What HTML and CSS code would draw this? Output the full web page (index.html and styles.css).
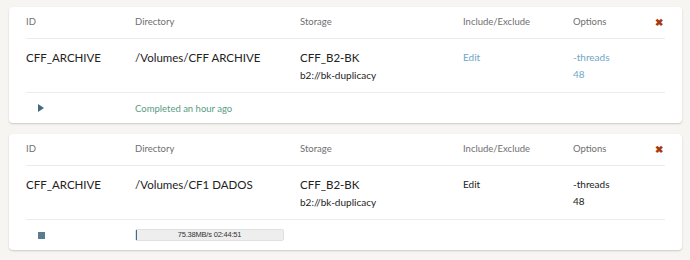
FILE: index.html
```html
<!DOCTYPE html>
<html>
<head>
    <title>Backups</title>
    <link rel="stylesheet" href="styles.css">
</head>
<body>
    <!-- first backup: finished -->
    <div class="card">
        <div class="grid head">
            <div>ID</div>
            <div>Directory</div>
            <div>Storage</div>
            <div>Include/Exclude</div>
            <div>Options</div>
            <div class="remove">&#10006;</div>
        </div>
        <div class="grid row">
            <div class="big">CFF_ARCHIVE</div>
            <div class="big">/Volumes/CFF ARCHIVE</div>
            <div><span class="big">CFF_B2-BK</span><br><span class="sub">b2://bk-duplicacy</span></div>
            <div class="link">Edit</div>
            <div class="link">-threads<br>48</div>
            <div></div>
        </div>
        <div class="grid foot">
            <div><span class="play"></span></div>
            <div class="status">Completed an hour ago</div>
        </div>
    </div>

    <!-- second backup: running -->
    <div class="card">
        <div class="grid head">
            <div>ID</div>
            <div>Directory</div>
            <div>Storage</div>
            <div>Include/Exclude</div>
            <div>Options</div>
            <div class="remove">&#10006;</div>
        </div>
        <div class="grid row">
            <div class="big">CFF_ARCHIVE</div>
            <div class="big">/Volumes/CF1 DADOS</div>
            <div><span class="big">CFF_B2-BK</span><br><span class="sub">b2://bk-duplicacy</span></div>
            <div class="plain">Edit</div>
            <div class="plain">-threads<br>48</div>
            <div></div>
        </div>
        <div class="grid foot">
            <div><span class="stop"></span></div>
            <div><div class="progress"><div class="fill" style="width: 1px"></div><span>75.38MB/s 02:44:51</span></div></div>
        </div>
    </div>
</body>
</html>
```

FILE: styles.css
```css
body {
    margin: 0;
    padding: 7px 8px 0 9px;
    background-color: #f6f5f1;
    font-family: "Lato", sans-serif;
    color: #222;
}
.card {
    background-color: white;
    border-radius: 4px;
    box-shadow: 0 1px 2px rgba(0,0,0,0.18);
    padding: 0 17px 0 17px;
    margin-bottom: 11px;
}
.grid {
    display: grid;
    grid-template-columns: 109px 165px 163px 110px 1fr 14px;
}
.head {
    font-size: 9.5px;
    color: #6f6f6f;
    height: 31px;
    line-height: 30px;
    border-bottom: 1px solid #eeece6;
}
.remove {
    color: #a8380f;
    font-size: 10px;
    font-weight: bold;
    text-align: right;
    padding-right: 2px;
}
.row {
    height: 54px;
    padding-top: 10px;
    box-sizing: border-box;
    line-height: 17px;
    border-bottom: 1px solid #eeece6;
    font-size: 10px;
}
.big {font-size: 11.5px;}
.sub {font-size: 10px;}
.link {color: #6fa6c9;}
.plain {color: #222;}
.foot {
    height: 30px;
    align-items: center;
    font-size: 9.5px;
}
.status {color: #5a9c84;}
.play {
    display: inline-block;
    margin-left: 12px;
    width: 0;
    height: 0;
    border-top: 4px solid transparent;
    border-bottom: 4px solid transparent;
    border-left: 6px solid #456a80;
}
.stop {
    display: inline-block;
    margin-left: 12px;
    width: 7px;
    height: 7px;
    background-color: #5b7c8c;
}
.progress {
    position: relative;
    width: 147px;
    height: 10px;
    background-color: #eeeeee;
    border: 1px solid #e0e0e0;
    border-radius: 2px;
    font-family: "Liberation Sans", sans-serif;
    font-size: 7.5px;
    line-height: 10px;
    letter-spacing: -0.2px;
    text-align: center;
    color: #333;
}
.fill {
    position: absolute;
    left: 0;
    top: 0;
    bottom: 0;
    background-color: #3d6a8f;
}
.progress span {position: relative;}
```
